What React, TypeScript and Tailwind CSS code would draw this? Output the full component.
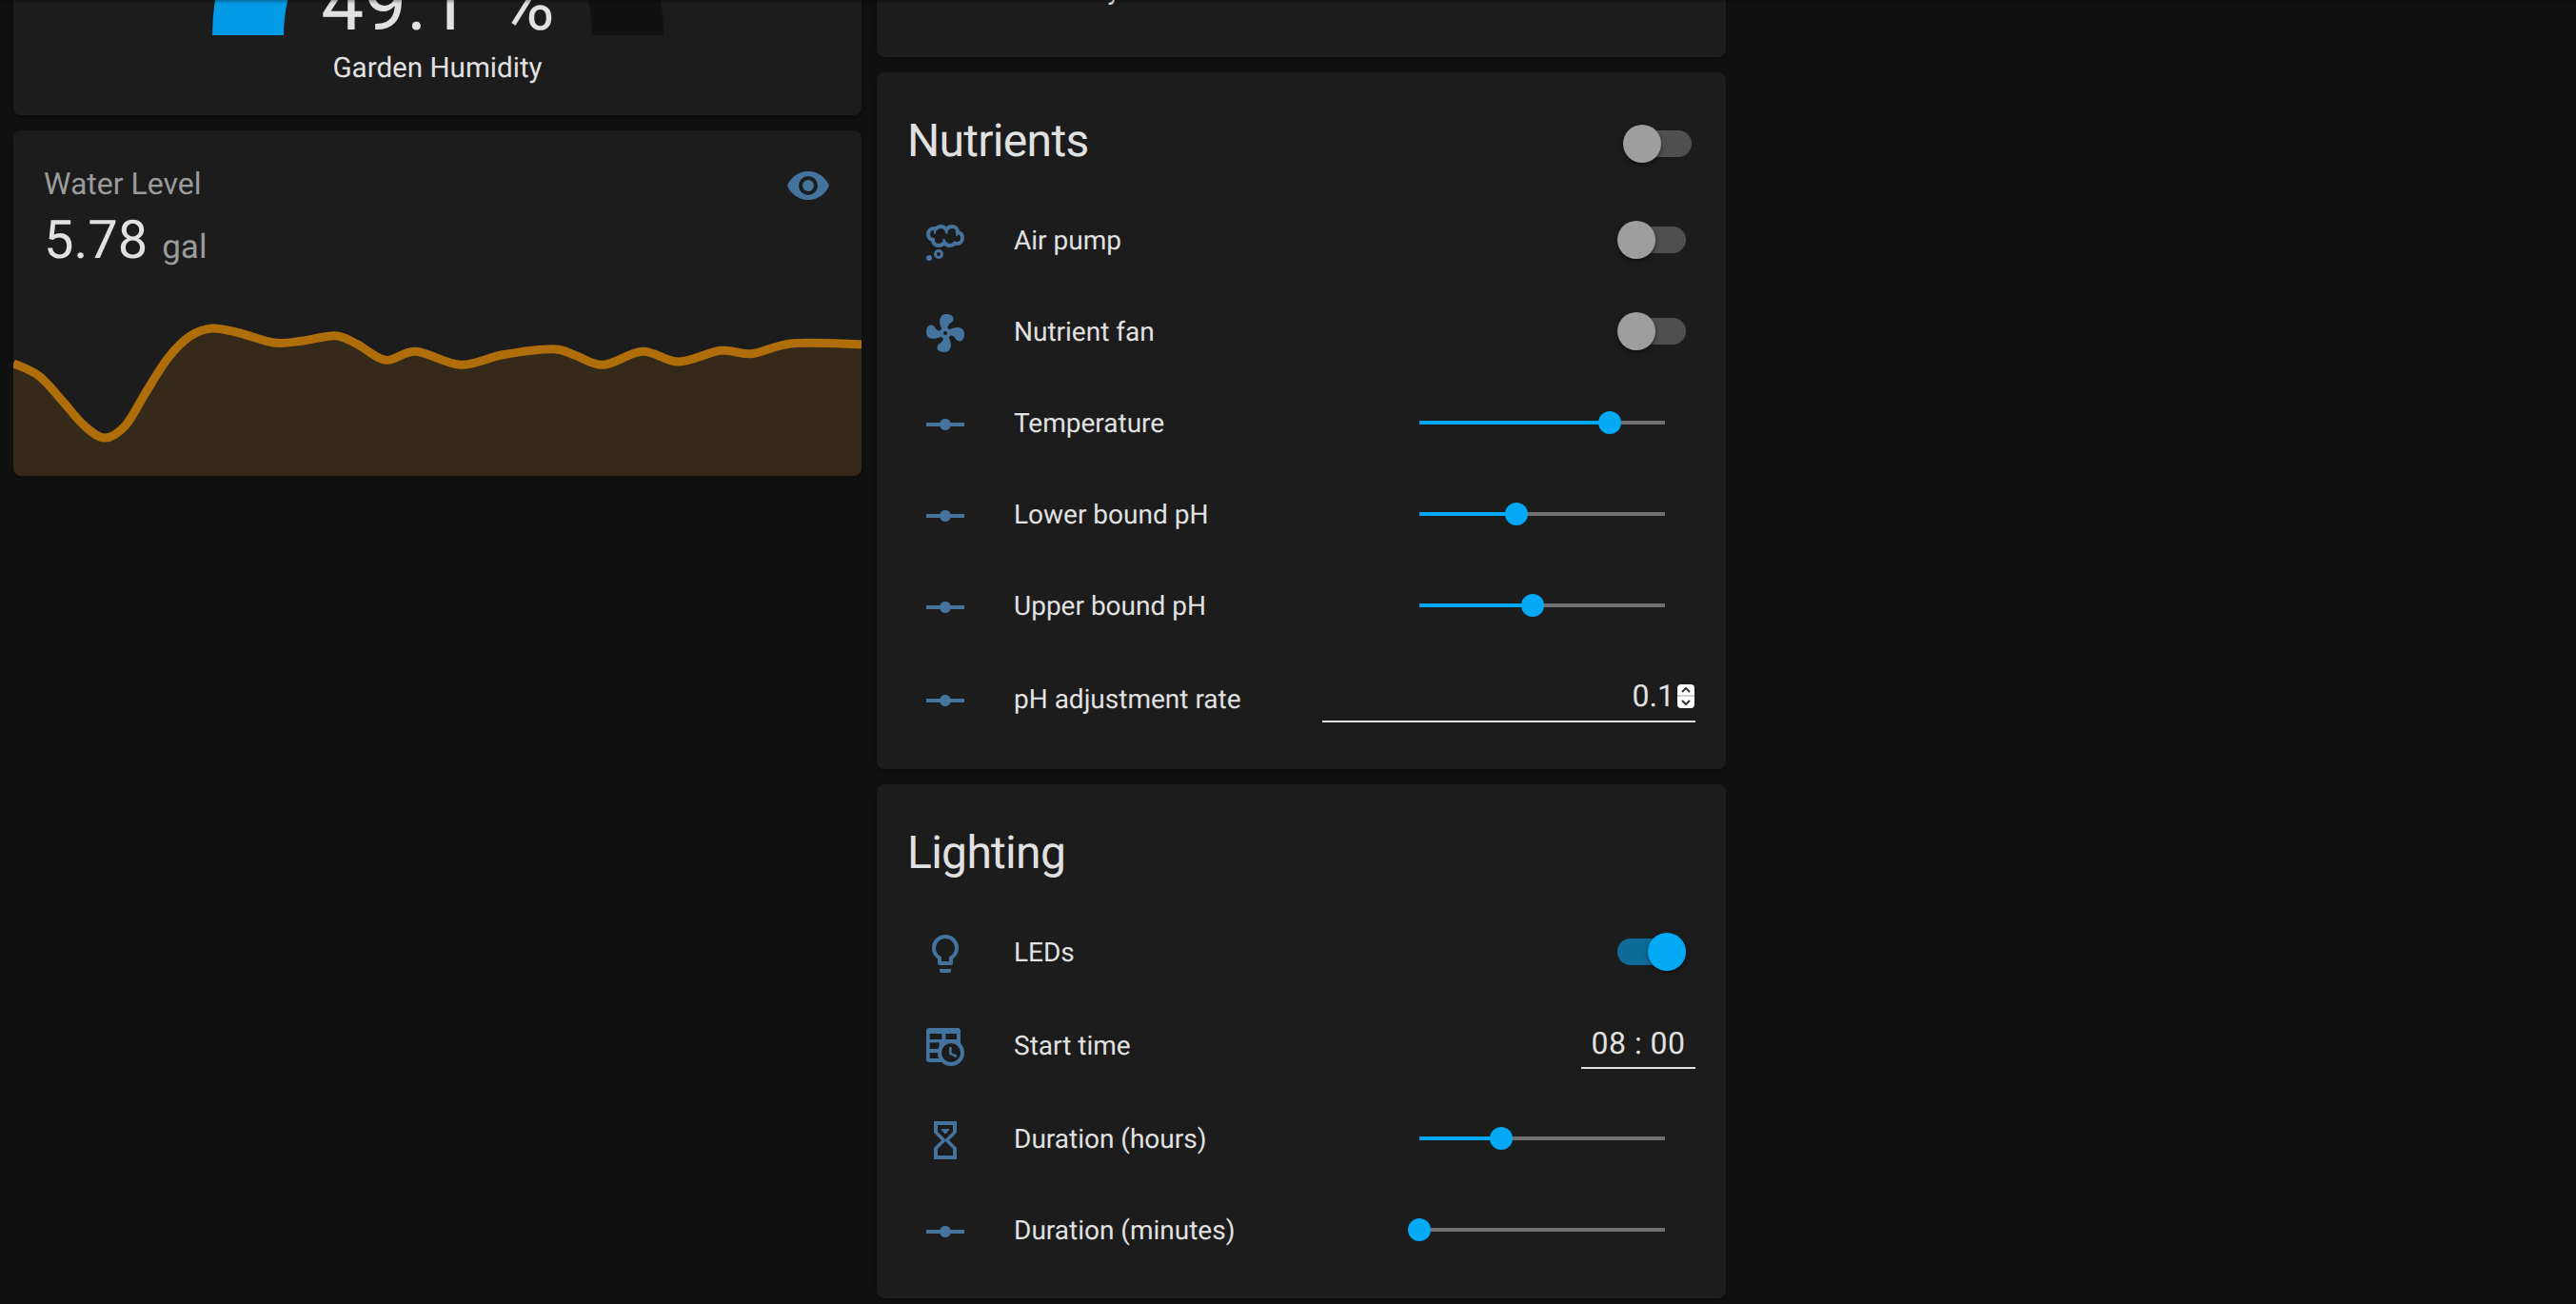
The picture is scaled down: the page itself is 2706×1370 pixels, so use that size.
const rows = {
  slider: "M2,11H9.17C9.58,9.83 10.69,9 12,9C13.31,9 14.42,9.83 14.83,11H22V13H14.83C14.42,14.17 13.31,15 12,15C10.69,15 9.58,14.17 9.17,13H2V11Z",
  fan: "M12,11A1,1 0 0,0 11,12A1,1 0 0,0 12,13A1,1 0 0,0 13,12A1,1 0 0,0 12,11M12.5,2C17,2 17.11,5.57 14.75,6.75C13.76,7.24 13.32,8.29 13.13,9.22C13.61,9.42 14.03,9.73 14.35,10.13C18.05,8.13 22.03,8.92 22.03,12.5C22.03,17 18.46,17.1 17.28,14.73C16.78,13.74 15.72,13.3 14.79,13.11C14.59,13.59 14.28,14 13.88,14.34C15.87,18.03 15.08,22 11.5,22C7,22 6.91,18.42 9.27,17.24C10.25,16.75 10.69,15.71 10.89,14.79C10.4,14.59 9.97,14.27 9.65,13.87C5.96,15.85 2,15.07 2,11.5C2,7 5.56,6.89 6.74,9.26C7.24,10.25 8.29,10.68 9.22,10.87C9.41,10.39 9.73,9.97 10.14,9.65C8.15,5.96 8.94,2 12.5,2Z",
  bulb: "M12,2A7,7 0 0,1 19,9C19,11.38 17.81,13.47 16,14.74V17A1,1 0 0,1 15,18H9A1,1 0 0,1 8,17V14.74C6.19,13.47 5,11.38 5,9A7,7 0 0,1 12,2M9,21V20H15V21A1,1 0 0,1 14,22H10A1,1 0 0,1 9,21M12,4A5,5 0 0,0 7,9C7,11.05 8.23,12.81 10,13.58V16H14V13.58C15.77,12.81 17,11.05 17,9A5,5 0 0,0 12,4Z",
  sand: "M6,2H18V8L14,12L18,16V22H6V16L10,12L6,8V2M16,16.5L12,12.5L8,16.5V20H16V16.5M12,11.5L16,7.5V4H8V7.5L12,11.5M10,6H14V6.75L12,8.75L10,6.75V6Z",
  eye: "M12,9A3,3 0 0,0 9,12A3,3 0 0,0 12,15A3,3 0 0,0 15,12A3,3 0 0,0 12,9M12,17A5,5 0 0,1 7,12A5,5 0 0,1 12,7A5,5 0 0,1 17,12A5,5 0 0,1 12,17M12,4.5C7,4.5 2.73,7.61 1,12C2.73,16.39 7,19.5 12,19.5C17,19.5 21.27,16.39 23,12C21.27,7.61 17,4.5 12,4.5Z",
};

function Mdi({ d }: { d: string }) {
  return (
    <svg viewBox="0 0 24 24" className="h-12 w-12 fill-[#44739e]">
      <path d={d} />
    </svg>
  );
}

function ThoughtIcon() {
  return (
    <svg viewBox="0 0 24 24" className="h-12 w-12">
      <path
        d="M14.5,14C13.3,14 12.2,13.4 11.5,12.3C10.8,13.4 9.7,14 8.5,14C6.7,14 5.5,12.7 5.5,11C4,10.7 3,9.5 3,8C3,6.3 4.3,5 6,5C6.4,5 6.8,5.1 7.1,5.2C7.7,4.5 8.5,4 9.5,4C10.7,4 11.8,4.6 12.5,5.7C13.2,4.6 14.3,4 15.5,4C17.2,4 18.5,5.3 18.5,7C20,7.3 21,8.5 21,10C21,11.7 19.7,13 18,13C17.6,13 17.2,12.9 16.9,12.8C16.3,13.5 15.5,14 14.5,14Z"
        fill="none"
        stroke="#44739e"
        strokeWidth="2"
      />
      <path
        d="M7,5.3C6.5,6 6.3,6.9 6.6,7.8M12.5,5.7C12.8,6.4 12.9,7 12.7,7.7M11.5,12.3C11.2,11.7 11.1,11.1 11.2,10.5M18.5,7C18.5,7.7 18.2,8.4 17.7,8.9"
        fill="none"
        stroke="#44739e"
        strokeWidth="1"
      />
      <circle cx="8.5" cy="18.5" r="1.75" fill="none" stroke="#44739e" strokeWidth="1.5" />
      <circle cx="3.5" cy="20.5" r="1.5" fill="#44739e" />
    </svg>
  );
}

function TableClockIcon() {
  return (
    <svg viewBox="0 0 24 24" className="h-12 w-12">
      <rect x="2" y="2" width="18" height="18" rx="1.5" fill="#44739e" />
      <g fill="#1c1c1c">
        <rect x="3.8" y="5" width="6.4" height="3" />
        <rect x="12.2" y="5" width="5.8" height="3" />
        <rect x="3.8" y="9.7" width="5" height="3.3" />
        <rect x="3.8" y="15" width="5" height="3" />
      </g>
      <circle cx="15" cy="15" r="7" fill="#44739e" />
      <circle cx="15" cy="15" r="5" fill="#1c1c1c" />
      <path d="M14.7,12V15.4L18,17" fill="none" stroke="#44739e" strokeWidth="1.3" />
    </svg>
  );
}

function Toggle({ on = false }: { on?: boolean }) {
  return (
    <div className="relative h-10 w-[72px] flex items-center justify-end">
      <div className={`h-7 rounded-[14px] ${on ? "w-[72px] bg-[#0f6b97]" : "w-[68px] bg-[#4f4f4f]"}`} />
      <div
        className={`absolute top-0 h-10 w-10 rounded-full shadow-[0_2px_4px_rgba(0,0,0,0.5)] ${
          on ? "right-0 bg-[#03a9f4]" : "left-0 bg-[#9e9e9e]"
        }`}
      />
    </div>
  );
}

function Slider({ value }: { value: number }) {
  return (
    <div className="relative mr-8 h-1 w-[258px] bg-[#6f6f6f]">
      <div className="h-1 bg-[#03a9f4]" style={{ width: `${value * 100}%` }} />
      <div
        className="absolute top-[-10px] ml-[-12px] h-6 w-6 rounded-full bg-[#03a9f4]"
        style={{ left: `${value * 100}%` }}
      />
    </div>
  );
}

function Row({
  icon,
  label,
  tall = false,
  children,
}: {
  icon: React.ReactNode;
  label: string;
  tall?: boolean;
  children: React.ReactNode;
}) {
  return (
    <div className={`flex items-center ${tall ? "h-[84px]" : "h-20"}`}>
      <div className="mt-1 flex w-20 justify-center">{icon}</div>
      <div className="mt-[2px] ml-8 flex-1 text-[28px] text-[#e1e1e1]">{label}</div>
      {children}
    </div>
  );
}

function Spinner() {
  return (
    <div className="ml-[3px] flex h-[25px] w-[18px] flex-col items-center justify-between rounded-[4px] bg-white py-[2px]">
      <svg viewBox="0 0 12 8" className="h-2 w-3 fill-none stroke-[#333] stroke-2">
        <path d="M2,6L6,2L10,6" />
      </svg>
      <div className="h-[2px] w-full bg-[#d0d0d0]" />
      <svg viewBox="0 0 12 8" className="h-2 w-3 fill-none stroke-[#333] stroke-2">
        <path d="M2,2L6,6L10,2" />
      </svg>
    </div>
  );
}

const chart = [
  [0, 61.7], [27, 75], [50.5, 100], [74, 126.7], [96, 140], [118, 126.7], [138.5, 93.3],
  [162, 56.7], [185.5, 33.3], [209, 25], [238, 30], [273.5, 40], [303, 38.3], [338, 32.7],
  [361.5, 41.7], [391, 58.3], [423, 49.3], [470, 63.3], [514, 52.7], [567, 46.7], [590, 53.3],
  [620, 63.3], [661, 49.3], [699, 60], [743, 48.3], [775, 51.7], [819, 40.7], [891, 41.7],
];

// catmull-rom through the sampled points
function smooth(pts: number[][]) {
  let d = `M${pts[0][0]},${pts[0][1]}`;
  for (let i = 0; i < pts.length - 1; i++) {
    const p0 = pts[Math.max(i - 1, 0)];
    const p1 = pts[i];
    const p2 = pts[i + 1];
    const p3 = pts[Math.min(i + 2, pts.length - 1)];
    const c1x = p1[0] + (p2[0] - p0[0]) / 6;
    const c1y = p1[1] + (p2[1] - p0[1]) / 6;
    const c2x = p2[0] - (p3[0] - p1[0]) / 6;
    const c2y = p2[1] - (p3[1] - p1[1]) / 6;
    d += `C${c1x},${c1y} ${c2x},${c2y} ${p2[0]},${p2[1]}`;
  }
  return d;
}

const card = "rounded-lg bg-[#1c1c1c] shadow-[0_2px_4px_rgba(0,0,0,0.3)]";
const title = "text-[48px] leading-[64px] tracking-[-0.7px] text-[#e1e1e1]";

function Gauge() {
  return (
    <svg viewBox="0 0 474 237" className="h-[237px] w-[474px] overflow-visible">
      <path d="M37.5,237A199.5,199.5 0 0 1 436.5,237" fill="none" stroke="#111111" strokeWidth="75" />
      <path d="M37.5,237A199.5,199.5 0 0 1 232,37.6" fill="none" stroke="#039be5" strokeWidth="75" />
      <text x="237" y="231" textAnchor="middle" fill="#e1e1e1" fontSize="80" wordSpacing="11">
        49.1 %
      </text>
    </svg>
  );
}

export default function App() {
  const line = smooth(chart);
  return (
    <div className="relative h-[1370px] overflow-hidden bg-[#111111] font-[Roboto,sans-serif] antialiased [text-rendering:geometricPrecision]">
      <div className="absolute inset-x-0 top-0 h-1 bg-gradient-to-b from-black/30 to-transparent" />
      <div className="flex items-start gap-4 pl-[14px]">
        <div className="-mt-[232px] flex w-[891px] flex-col gap-4">
          <div className={`${card} flex flex-col items-center pt-8 pb-[31px]`}>
            <Gauge />
            <div className="mt-[17px] h-9 text-[29.6px] leading-9 text-[#e1e1e1]">Garden Humidity</div>
          </div>
          <div className={`${card} overflow-hidden`}>
            <div className="flex h-[183px] items-start justify-between pt-[34px] pr-8 pl-8">
              <div>
                <div className="text-[32px] leading-11 text-[#9b9b9b]">Water Level</div>
                <div className="mt-[5px] flex items-baseline text-[56px] leading-[64px] text-[#e1e1e1]">
                  5.78
                  <span className="ml-[15px] text-[35px] text-[#9b9b9b]">gal</span>
                </div>
              </div>
              <Mdi d={rows.eye} />
            </div>
            <svg viewBox="0 0 891 180" className="block h-[180px] w-full">
              <path d={`${line}L891,180L0,180Z`} fill="#35291a" />
              <path d={line} fill="none" stroke="#b06e0b" strokeWidth="9" />
            </svg>
          </div>
        </div>

        <div className="-mt-[140px] flex w-[892px] flex-col gap-4">
          <div className={`${card} flex h-[200px] items-start px-8 pt-[114px]`}>
            <div className="ml-[112px] text-[28px] leading-8 text-[#e1e1e1]">Humidity</div>
          </div>

          <div className={`${card} px-8 pb-8`}>
            <div className="flex h-[136px] items-start justify-between pt-10">
              <div className={title}>Nutrients</div>
              <div className="mt-[15px] mr-[4px]">
                <Toggle />
              </div>
            </div>
            <div className="flex flex-col gap-4">
              <Row icon={<ThoughtIcon />} label="Air pump">
                <div className="mr-[10px]">
                  <Toggle />
                </div>
              </Row>
              <Row icon={<Mdi d={rows.fan} />} label="Nutrient fan">
                <div className="mr-[10px]">
                  <Toggle />
                </div>
              </Row>
              <Row icon={<Mdi d={rows.slider} />} label="Temperature">
                <Slider value={0.775} />
              </Row>
              <Row icon={<Mdi d={rows.slider} />} label="Lower bound pH">
                <Slider value={0.395} />
              </Row>
              <Row icon={<Mdi d={rows.slider} />} label="Upper bound pH">
                <Slider value={0.46} />
              </Row>
              <Row icon={<Mdi d={rows.slider} />} label="pH adjustment rate" tall>
                <div className="mb-4 flex h-[66px] w-[392px] items-center justify-end border-b-2 border-[#e1e1e1] pt-3 pr-[1px] text-[32px] text-[#e1e1e1]">
                  0.1
                  <Spinner />
                </div>
              </Row>
            </div>
          </div>

          <div className={`${card} px-8 pb-8`}>
            <div className="flex h-[136px] items-start pt-10">
              <div className={title}>Lighting</div>
            </div>
            <div className="flex flex-col gap-4">
              <Row icon={<Mdi d={rows.bulb} />} label="LEDs">
                <div className="mr-[10px]">
                  <Toggle on />
                </div>
              </Row>
              <Row icon={<TableClockIcon />} label="Start time" tall>
                <div className="mb-4 flex h-[66px] w-[120px] items-center justify-center border-b-2 border-[#e1e1e1] pt-[14px] text-[32px] tracking-[0.5px] whitespace-pre text-[#e1e1e1]">
                  08 : 00
                </div>
              </Row>
              <Row icon={<Mdi d={rows.sand} />} label="Duration (hours)">
                <Slider value={0.333} />
              </Row>
              <Row icon={<Mdi d={rows.slider} />} label="Duration (minutes)">
                <Slider value={0} />
              </Row>
            </div>
          </div>
        </div>
      </div>
    </div>
  );
}
